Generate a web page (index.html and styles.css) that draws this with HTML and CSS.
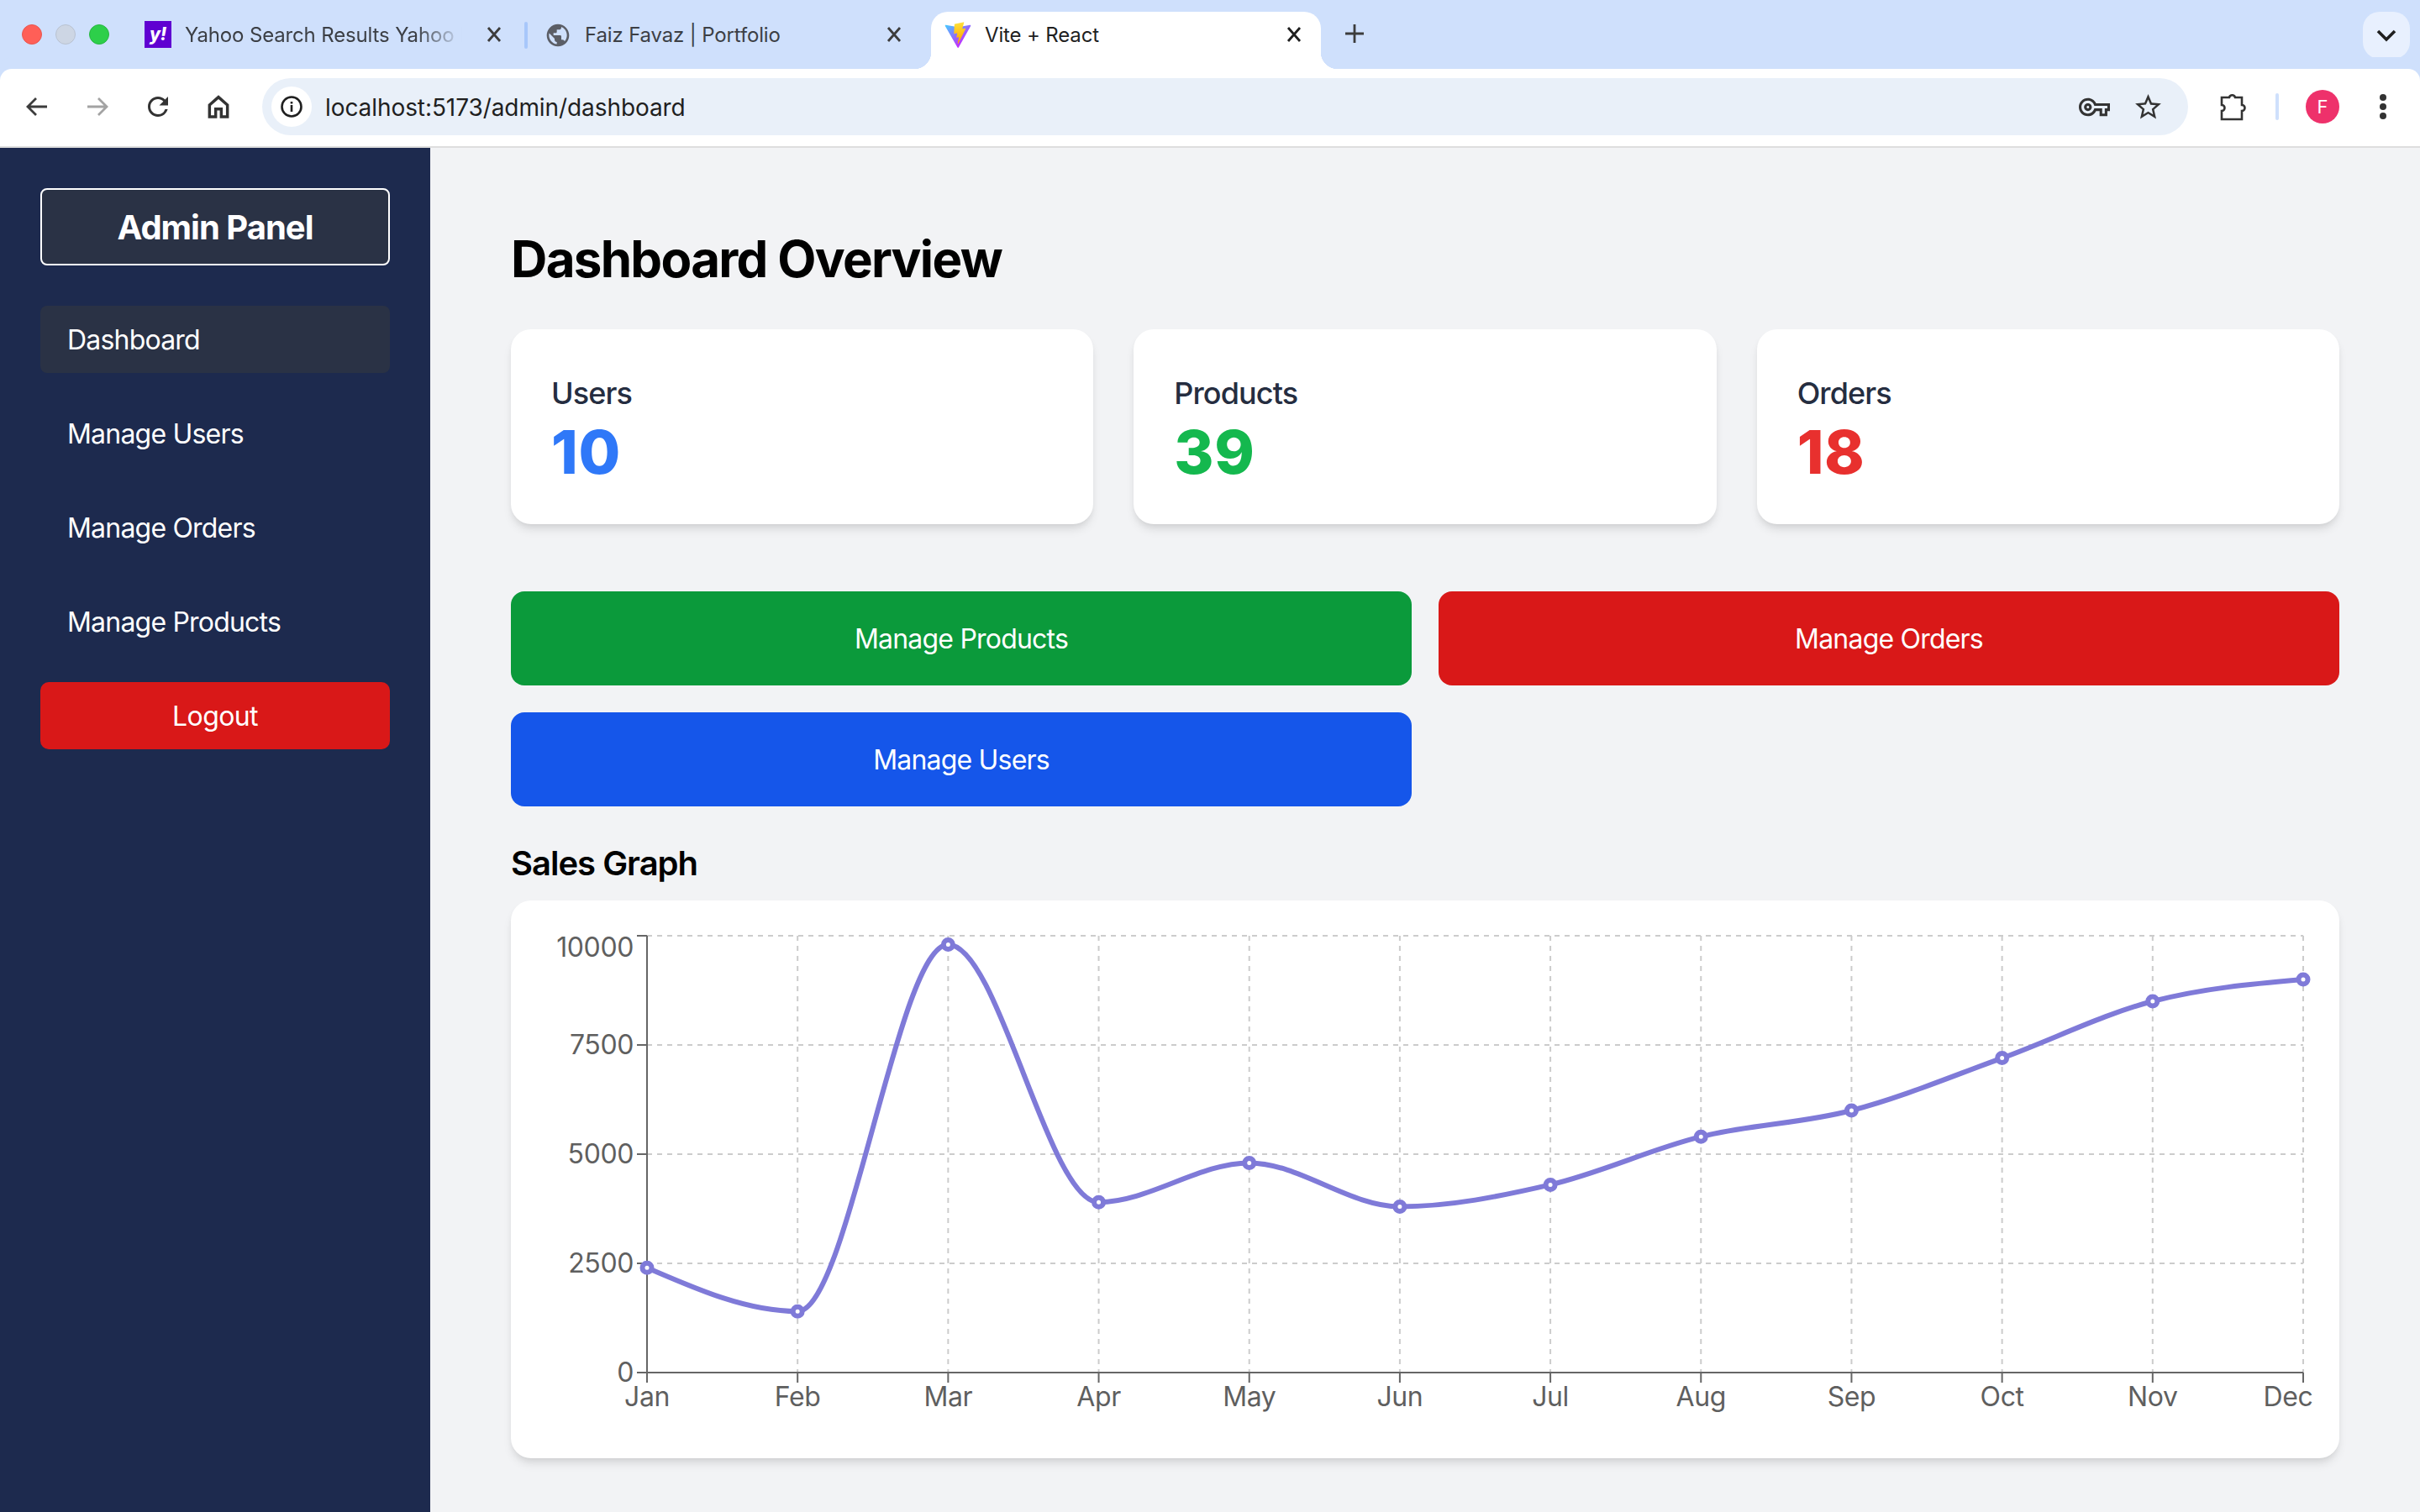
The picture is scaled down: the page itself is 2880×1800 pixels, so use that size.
FILE: index.html
```html
<!DOCTYPE html>
<html lang="en">
<head>
    <meta charset="UTF-8">
    <title>Vite + React</title>
    <link rel="stylesheet" href="styles.css">
</head>
<body>
    <div class="tab-bar">
        <div class="traffic">
            <span class="light light-red"></span>
            <span class="light light-gray"></span>
            <span class="light light-green"></span>
        </div>
        <div class="tab">
            <span class="yahoo-icon">y!</span>
            <span class="tab-title tab-title-fade">Yahoo Search Results Yahoo Image Search</span>
            <svg class="tab-close" viewBox="0 0 32 32"><path d="M9 8l14 16M23 8L9 24" class="icon-line"/></svg>
        </div>
        <span class="tab-sep"></span>
        <div class="tab">
            <svg class="favicon" viewBox="0 0 24 24"><path fill="#5b5e66" d="M12 2C6.48 2 2 6.48 2 12s4.48 10 10 10 10-4.48 10-10S17.52 2 12 2zm-1 17.93c-3.95-.49-7-3.85-7-7.93 0-.62.08-1.21.21-1.79L9 15v1c0 1.1.9 2 2 2v1.93zm6.9-2.54c-.26-.81-1-1.39-1.9-1.39h-1v-3c0-.55-.45-1-1-1H8v-2h2c.55 0 1-.45 1-1V7h2c1.1 0 2-.9 2-2v-.41c2.93 1.19 5 4.06 5 7.41 0 2.08-.8 3.97-2.1 5.39z"/></svg>
            <span class="tab-title">Faiz Favaz | Portfolio</span>
            <svg class="tab-close" viewBox="0 0 32 32"><path d="M9 8l14 16M23 8L9 24" class="icon-line"/></svg>
        </div>
        <div class="tab tab-active">
            <svg class="favicon" viewBox="0 0 410 404">
                <defs>
                    <linearGradient id="vite-a" x1="6" y1="33" x2="235" y2="344" gradientUnits="userSpaceOnUse"><stop stop-color="#41D1FF"/><stop offset="1" stop-color="#BD34FE"/></linearGradient>
                    <linearGradient id="vite-b" x1="194" y1="8.8" x2="236" y2="293" gradientUnits="userSpaceOnUse"><stop stop-color="#FFEA83"/><stop offset=".08" stop-color="#FFDD35"/><stop offset="1" stop-color="#FFA800"/></linearGradient>
                </defs>
                <path fill="url(#vite-a)" d="M399.641 59.5246L215.643 388.545C211.844 395.338 202.084 395.378 198.228 388.618L10.5817 59.5563C6.38087 52.1896 12.6802 43.2665 21.0281 44.7586L205.223 77.6824C206.398 77.8924 207.601 77.8904 208.776 77.6763L389.119 44.8058C397.439 43.2894 403.768 52.1434 399.641 59.5246Z"/>
                <path fill="url(#vite-b)" d="M292.965 1.5744L156.801 28.2552C154.563 28.6937 152.906 30.5903 152.771 32.8664L144.395 174.33C144.198 177.662 147.258 180.248 150.51 179.498L188.42 170.749C191.967 169.931 195.172 173.055 194.443 176.622L183.18 231.775C182.422 235.487 185.907 238.661 189.532 237.56L212.947 230.446C216.577 229.344 220.065 232.527 219.297 236.242L201.398 322.875C200.278 328.294 207.486 331.249 210.492 326.603L212.5 323.5L323.454 102.072C325.312 98.3645 322.108 94.137 318.036 94.9228L279.014 102.454C275.347 103.161 272.227 99.746 273.262 96.1583L298.731 7.86689C299.767 4.27314 296.636 0.855181 292.965 1.5744Z"/>
            </svg>
            <span class="tab-title">Vite + React</span>
            <svg class="tab-close tab-close-active" viewBox="0 0 32 32"><path d="M9 8l14 16M23 8L9 24" class="icon-line"/></svg>
        </div>
        <div class="new-tab">
            <svg viewBox="0 0 24 24" width="24" height="24"><path d="M12 1v22M1 12h22" class="icon-line"/></svg>
        </div>
        <div class="tab-search">
            <svg viewBox="0 0 24 24" width="24" height="24"><path d="M2 7l10 10L22 7" class="icon-line icon-line-bold"/></svg>
        </div>
    </div>

    <div class="toolbar">
        <div class="nav-btn">
            <svg viewBox="0 0 32 32" class="icon32"><path d="M28 16H6M15 6L5 16l10 10" class="icon-line"/></svg>
        </div>
        <div class="nav-btn">
            <svg viewBox="0 0 32 32" class="icon32"><path d="M4 16h22M17 6l10 10-10 10" class="icon-line icon-line-muted"/></svg>
        </div>
        <div class="nav-btn">
            <svg viewBox="0 0 24 24" class="icon-reload"><path fill="#333" d="M17.65 6.35A7.958 7.958 0 0 0 12 4c-4.42 0-7.99 3.58-7.99 8s3.57 8 7.99 8c3.73 0 6.84-2.55 7.73-6h-2.08A5.99 5.99 0 0 1 12 18c-3.31 0-6-2.69-6-6s2.69-6 6-6c1.66 0 3.14.69 4.22 1.78L13 11h7V4l-2.35 2.35z"/></svg>
        </div>
        <div class="nav-btn">
            <svg viewBox="0 0 24 24" class="icon32"><path d="M4 10.5L12 3.5l8 7V21h-5.5v-7h-5v7H4z" class="icon-line icon-line-home"/></svg>
        </div>
        <div class="omnibox">
            <div class="site-info">
                <svg viewBox="0 0 26 26" width="26" height="26">
                    <circle cx="13" cy="13" r="11.5" fill="none" stroke="#1f1f1f" stroke-width="2.6"/>
                    <path d="M11.7 11h2.6v8h-2.6zM11.7 7h2.6v2.5h-2.6z" fill="#1f1f1f"/>
                </svg>
            </div>
            <span class="url">localhost:5173/admin/dashboard</span>
            <div class="omni-btn">
                <svg viewBox="0 0 24 24" width="37" height="37"><path fill="#333" d="M22 19h-6v-4h-2.68c-1.14 2.42-3.6 4-6.32 4-3.86 0-7-3.14-7-7s3.14-7 7-7c2.72 0 5.17 1.58 6.32 4H24v6h-2v4zm-4-2h2v-4h2v-2H11.94l-.23-.67C11.01 8.34 9.11 7 7 7c-2.76 0-5 2.24-5 5s2.24 5 5 5c2.11 0 4.01-1.34 4.71-3.33l.23-.67H18v4zM7 15c-1.65 0-3-1.35-3-3s1.35-3 3-3 3 1.35 3 3-1.35 3-3 3zm0-4c-.55 0-1 .45-1 1s.45 1 1 1 1-.45 1-1-.45-1-1-1z"/></svg>
            </div>
            <div class="omni-btn">
                <svg viewBox="0 0 24 24" width="37" height="37"><path fill="#333" d="M22 9.24l-7.19-.62L12 2 9.19 8.63 2 9.24l5.46 4.73L5.82 21 12 17.27 18.18 21l-1.63-7.03L22 9.24zM12 15.4l-3.76 2.27 1-4.28-3.32-2.88 4.38-.38L12 6.1l1.71 4.04 4.38.38-3.32 2.88 1 4.28L12 15.4z"/></svg>
            </div>
        </div>
        <div class="nav-btn nav-btn-ext">
            <svg viewBox="0 0 32 36" width="32" height="36"><path d="M3 7h9a3.6 3.6 0 0 1 7 0h8v9a3.4 3.4 0 0 1 0 7v10H3V23a3.4 3.4 0 0 0 0-7z" class="icon-line icon-line-home"/></svg>
        </div>
        <span class="toolbar-sep"></span>
        <div class="nav-btn"><span class="avatar">F</span></div>
        <div class="nav-btn menu-dots"><span></span><span></span><span></span></div>
    </div>

    <div class="app">
        <aside class="sidebar">
            <div class="brand">Admin Panel</div>
            <nav class="side-nav">
                <a class="side-link side-link-active">Dashboard</a>
                <a class="side-link">Manage Users</a>
                <a class="side-link">Manage Orders</a>
                <a class="side-link">Manage Products</a>
                <button class="logout">Logout</button>
            </nav>
        </aside>

        <main class="main">
            <h1 class="page-title">Dashboard Overview</h1>

            <div class="stats">
                <div class="stat-card">
                    <div class="stat-label">Users</div>
                    <div class="stat-value text-blue">10</div>
                </div>
                <div class="stat-card">
                    <div class="stat-label">Products</div>
                    <div class="stat-value text-green">39</div>
                </div>
                <div class="stat-card">
                    <div class="stat-label">Orders</div>
                    <div class="stat-value text-red">18</div>
                </div>
            </div>

            <div class="actions">
                <button class="action bg-green">Manage Products</button>
                <button class="action bg-red">Manage Orders</button>
                <button class="action bg-blue">Manage Users</button>
            </div>

            <h2 class="section-title">Sales Graph</h2>
            <div class="chart-card">
                <svg class="chart" viewBox="608 1072 2176 664" width="2176" height="664">
                    <g class="grid">
                        <path d="M770 1114H2741M770 1244H2741M770 1374H2741M770 1504H2741"/>
                        <path d="M770 1114V1634M949.18 1114V1634M1128.36 1114V1634M1307.55 1114V1634M1486.73 1114V1634M1665.91 1114V1634M1845.09 1114V1634M2024.27 1114V1634M2203.45 1114V1634M2382.64 1114V1634M2561.82 1114V1634M2741 1114V1634"/>
                    </g>
                    <g class="axis">
                        <path d="M770 1114V1634H2741"/>
                        <path d="M758 1114H770M758 1244H770M758 1374H770M758 1504H770M758 1634H770"/>
                        <path d="M770 1634V1646M949.18 1634V1646M1128.36 1634V1646M1307.55 1634V1646M1486.73 1634V1646M1665.91 1634V1646M1845.09 1634V1646M2024.27 1634V1646M2203.45 1634V1646M2382.64 1634V1646M2561.82 1634V1646M2741 1634V1646"/>
                    </g>
                    <g class="y-labels">
                        <text x="754" y="1139">10000</text>
                        <text x="754" y="1255">7500</text>
                        <text x="754" y="1385">5000</text>
                        <text x="754" y="1515">2500</text>
                        <text x="754" y="1645">0</text>
                    </g>
                    <g class="x-labels">
                        <text x="770" y="1674">Jan</text>
                        <text x="949.18" y="1674">Feb</text>
                        <text x="1128.36" y="1674">Mar</text>
                        <text x="1307.55" y="1674">Apr</text>
                        <text x="1486.73" y="1674">May</text>
                        <text x="1665.91" y="1674">Jun</text>
                        <text x="1845.09" y="1674">Jul</text>
                        <text x="2024.27" y="1674">Aug</text>
                        <text x="2203.45" y="1674">Sep</text>
                        <text x="2382.64" y="1674">Oct</text>
                        <text x="2561.82" y="1674">Nov</text>
                        <text x="2723" y="1674">Dec</text>
                    </g>
                    <path class="sales-line" d="M770 1509.2C829.73 1535.2 889.45 1561.2 949.18 1561.2C1008.91 1561.2 1068.63 1124.4 1128.36 1124.4C1188.09 1124.4 1247.82 1431.2 1307.55 1431.2C1367.27 1431.2 1427 1384.4 1486.73 1384.4C1546.45 1384.4 1606.18 1436.4 1665.91 1436.4C1725.64 1436.4 1785.36 1424.27 1845.09 1410.4C1904.82 1396.53 1964.54 1367.93 2024.27 1353.2C2084 1338.47 2143.72 1337.6 2203.45 1322C2263.18 1306.4 2322.91 1281.27 2382.64 1259.6C2442.36 1237.93 2502.09 1207.6 2561.82 1192C2621.55 1176.4 2681.27 1171.2 2741 1166"/>
                    <g class="sales-dots">
                        <circle cx="770" cy="1509.2" r="5.5"/>
                        <circle cx="949.18" cy="1561.2" r="5.5"/>
                        <circle cx="1128.36" cy="1124.4" r="5.5"/>
                        <circle cx="1307.55" cy="1431.2" r="5.5"/>
                        <circle cx="1486.73" cy="1384.4" r="5.5"/>
                        <circle cx="1665.91" cy="1436.4" r="5.5"/>
                        <circle cx="1845.09" cy="1410.4" r="5.5"/>
                        <circle cx="2024.27" cy="1353.2" r="5.5"/>
                        <circle cx="2203.45" cy="1322" r="5.5"/>
                        <circle cx="2382.64" cy="1259.6" r="5.5"/>
                        <circle cx="2561.82" cy="1192" r="5.5"/>
                        <circle cx="2741" cy="1166" r="5.5"/>
                    </g>
                </svg>
            </div>
        </main>
    </div>
</body>
</html>
```

FILE: styles.css
```css
* {
    box-sizing: border-box;
}

body {
    margin: 0;
    height: 100vh;
    display: flex;
    flex-direction: column;
    overflow: hidden;
    font-family: Inter, "Liberation Sans", sans-serif;
    background-color: #f2f3f5;
}

/* browser chrome */
.tab-bar {
    height: 82px;
    flex: none;
    display: flex;
    background-color: #cfe0fc;
}

.traffic {
    width: 156px;
    height: 82px;
    padding-left: 26px;
    display: flex;
    align-items: center;
    gap: 16px;
    flex: none;
}

.light {
    width: 24px;
    height: 24px;
    border-radius: 50%;
}

.light-red {
    background-color: #ff5f57;
    border: 1px solid #e8564f;
}

.light-gray {
    background-color: #cdd6e4;
    border: 1px solid #b9c2d1;
}

.light-green {
    background-color: #2dcf4a;
    border: 1px solid #27b640;
}

.tab {
    width: 464px;
    height: 68px;
    margin-top: 14px;
    padding: 0 16px 14px;
    position: relative;
    display: flex;
    align-items: center;
    flex: none;
    font-size: 24px;
    letter-spacing: -0.15px;
    color: #3c3f45;
}

.tab-active {
    margin-left: 12px;
    background-color: #fff;
    border-radius: 20px 20px 0 0;
    color: #1f1f1f;
}

.tab-active::before,
.tab-active::after {
    content: "";
    position: absolute;
    bottom: 0;
    width: 20px;
    height: 20px;
}

.tab-active::before {
    left: -20px;
    background: radial-gradient(circle at 0 0, transparent 20px, #fff 20.5px);
}

.tab-active::after {
    right: -20px;
    background: radial-gradient(circle at 100% 0, transparent 20px, #fff 20.5px);
}

.tab-sep {
    width: 4px;
    height: 32px;
    margin: 26px 4px 0;
    border-radius: 2px;
    background-color: #a8c7fa;
    flex: none;
}

.yahoo-icon {
    width: 32px;
    height: 32px;
    margin-right: 16px;
    flex: none;
    background-color: #5f01d1;
    color: #fff;
    font-size: 21px;
    font-weight: 800;
    font-style: italic;
    text-align: center;
    line-height: 31px;
}

.favicon {
    width: 32px;
    height: 32px;
    margin: 2px 16px 0 0;
    flex: none;
}

.tab-title {
    flex: 1;
    min-width: 0;
    white-space: nowrap;
    overflow: hidden;
}

.tab-title-fade {
    margin-right: 8px;
    -webkit-mask-image: linear-gradient(to right, #000 80%, transparent 96%);
    mask-image: linear-gradient(to right, #000 80%, transparent 96%);
}

.tab-close {
    width: 32px;
    height: 32px;
    flex: none;
}

.tab-close-active .icon-line {
    stroke: #1f1f1f;
}

.new-tab {
    width: 56px;
    height: 56px;
    margin: 12px 0 0 12px;
    display: flex;
    align-items: center;
    justify-content: center;
    flex: none;
}

.tab-search {
    width: 56px;
    height: 56px;
    margin: 14px 12px 0 auto;
    display: flex;
    align-items: center;
    justify-content: center;
    border-radius: 20px;
    background-color: #e8f0fe;
    flex: none;
}

.icon-line {
    fill: none;
    stroke: #3c3c3c;
    stroke-width: 2.8;
}

.icon-line-muted {
    stroke: #a3a3a3;
}

.icon-line-home {
    stroke: #333;
    stroke-width: 2.6;
}

.icon-line-bold {
    stroke: #1f1f1f;
    stroke-width: 3.6;
}

.icon32 {
    width: 32px;
    height: 32px;
}

.icon-reload {
    width: 36px;
    height: 36px;
}

.toolbar {
    height: 94px;
    flex: none;
    padding: 12px 8px 14px;
    display: flex;
    align-items: center;
    background-color: #fff;
    border-bottom: 2px solid #dedede;
    border-radius: 14px 14px 0 0;
    box-shadow: 0 -14px 0 0 #cfe0fc;
}

.nav-btn {
    width: 72px;
    height: 68px;
    flex: none;
    display: flex;
    align-items: center;
    justify-content: center;
}

.omnibox {
    height: 68px;
    flex: 1;
    margin-left: 16px;
    padding: 0 16px 0 11px;
    display: flex;
    align-items: center;
    border-radius: 34px;
    background-color: #e9f0f9;
}

.site-info {
    width: 48px;
    height: 48px;
    margin-right: 16px;
    display: flex;
    align-items: center;
    justify-content: center;
    border-radius: 50%;
    background-color: #fff;
    flex: none;
}

.url {
    flex: 1;
    padding-top: 2px;
    font-size: 28px;
    letter-spacing: -0.08px;
    color: #1f1f1f;
}

.omni-btn {
    width: 64px;
    height: 68px;
    display: flex;
    align-items: center;
    justify-content: center;
    flex: none;
}

.nav-btn-ext {
    margin-left: 17px;
}

.toolbar-sep {
    width: 4px;
    height: 32px;
    margin: 0 16px 0 15px;
    border-radius: 2px;
    background-color: #cfe0fc;
    flex: none;
}

.avatar {
    width: 40px;
    height: 40px;
    border-radius: 50%;
    background-color: #ee316b;
    color: #fff;
    font-size: 22px;
    text-align: center;
    line-height: 40px;
}

.menu-dots {
    flex-direction: column;
    gap: 3px;
}

.menu-dots span {
    width: 8px;
    height: 8px;
    border-radius: 50%;
    background-color: #333;
}

/* page */
.app {
    flex: 1;
    min-height: 0;
    display: flex;
}

.sidebar {
    width: 512px;
    flex: none;
    padding: 48px;
    background-color: #1d2a4e;
}

.brand {
    margin-bottom: 48px;
    padding: 17px 16px 15px;
    border: 2px solid #fff;
    border-radius: 8px;
    background-color: #2a3245;
    color: #fff;
    font-size: 40px;
    line-height: 56px;
    font-weight: 700;
    letter-spacing: -1px;
    text-align: center;
}

.side-nav {
    display: flex;
    flex-direction: column;
    gap: 32px;
}

.side-link {
    padding: 17px 32px 15px;
    border-radius: 8px;
    color: #fff;
    font-size: 32px;
    line-height: 48px;
    letter-spacing: -0.8px;
}

.side-link-active {
    background-color: #2a3245;
}

.logout {
    padding: 17px 16px 15px;
    border: none;
    border-radius: 10px;
    background-color: #d91818;
    color: #fff;
    font-family: inherit;
    font-size: 32px;
    line-height: 48px;
    letter-spacing: -0.6px;
}

.main {
    flex: 1;
    min-width: 0;
    padding: 96px;
}

.page-title {
    margin: 0 0 48px;
    font-size: 60px;
    line-height: 72px;
    font-weight: 700;
    letter-spacing: -1.7px;
    color: #000;
}

.stats {
    display: grid;
    grid-template-columns: repeat(3, 1fr);
    gap: 48px;
}

.stat-card {
    padding: 48px;
    border-radius: 24px;
    background-color: #fff;
    box-shadow: 0 8px 12px -2px rgba(0, 0, 0, 0.1), 0 4px 8px -4px rgba(0, 0, 0, 0.1);
}

.stat-label {
    font-size: 36px;
    line-height: 56px;
    font-weight: 500;
    letter-spacing: -0.9px;
    color: #252d40;
}

.stat-value {
    padding-top: 2px;
    height: 80px;
    font-size: 72px;
    line-height: 80px;
    font-weight: 800;
    letter-spacing: 0.6px;
}

.text-blue {
    color: #2f78f8;
}

.text-green {
    color: #14b84e;
}

.text-red {
    color: #e8302e;
}

.actions {
    margin-top: 80px;
    display: grid;
    grid-template-columns: repeat(2, 1fr);
    gap: 32px;
}

.action {
    padding: 33px 32px 31px;
    border: none;
    border-radius: 16px;
    color: #fff;
    font-family: inherit;
    font-size: 32px;
    line-height: 48px;
    letter-spacing: -0.8px;
}

.bg-green {
    background-color: #0b9a3b;
}

.bg-red {
    background-color: #d91818;
}

.bg-blue {
    background-color: #1556ea;
}

.section-title {
    margin: 40px 0 16px;
    font-size: 40px;
    line-height: 56px;
    font-weight: 600;
    letter-spacing: -1px;
    color: #000;
}

.chart-card {
    border-radius: 24px;
    background-color: #fff;
    box-shadow: 0 8px 12px -2px rgba(0, 0, 0, 0.1), 0 4px 8px -4px rgba(0, 0, 0, 0.1);
}

.chart {
    display: block;
}

.grid path {
    fill: none;
    stroke: #ccc;
    stroke-width: 2;
    stroke-dasharray: 6 6;
}

.axis path {
    fill: none;
    stroke: #666;
    stroke-width: 2;
}

.y-labels text,
.x-labels text {
    font-size: 32px;
    letter-spacing: -0.4px;
    fill: #5f5f5f;
}

.y-labels text {
    text-anchor: end;
}

.x-labels text {
    text-anchor: middle;
}

.sales-line {
    fill: none;
    stroke: #7f7ad8;
    stroke-width: 6;
}

.sales-dots circle {
    fill: #fff;
    stroke: #7f7ad8;
    stroke-width: 6;
}
```
